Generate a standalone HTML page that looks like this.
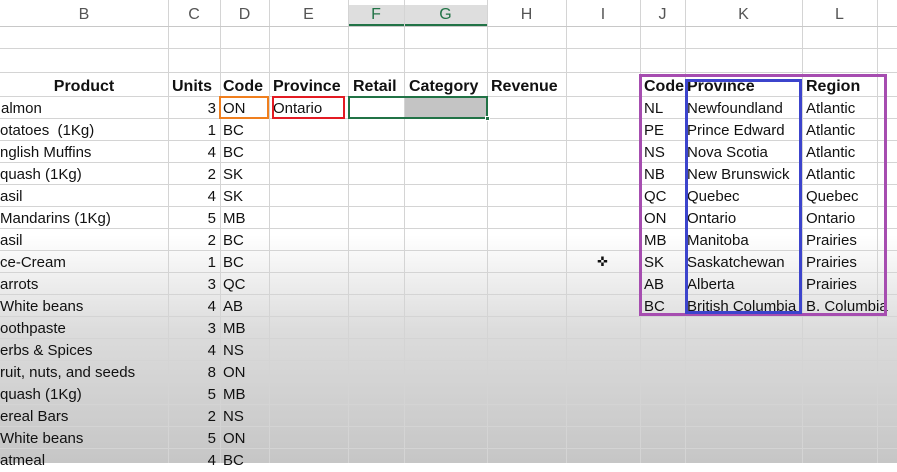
<!DOCTYPE html>
<html><head><meta charset="utf-8"><style>
html,body{margin:0;padding:0}
body{width:897px;height:463px;overflow:hidden;position:relative;font-family:"Liberation Sans",sans-serif;
background:linear-gradient(#fff 0px,#fff 235px,#dcdcdc 330px,#c6c6c6 463px);}
.v{position:absolute;top:0;height:463px;width:1px;background:#d4d4d4}
.h{position:absolute;left:0;width:897px;height:1px;background:#d4d4d4}
.t{position:absolute;font-size:15px;line-height:22px;color:#111;white-space:nowrap;margin-top:2px}
.b{font-weight:bold;font-size:16px}
.r{text-align:right}
.hd{position:absolute;top:4px;height:22px;line-height:22px;font-size:16px;color:#555;text-align:center}
.box{position:absolute;box-sizing:border-box}
</style></head><body>
<div class="box" style="left:348px;top:5px;width:139px;height:21px;background:#dedede;border-bottom:2px solid #217346"></div>
<div class="hd" style="left:0;width:168px">B</div>
<div class="hd" style="left:168px;width:52px">C</div>
<div class="hd" style="left:220px;width:49px">D</div>
<div class="hd" style="left:269px;width:79px">E</div>
<div class="hd" style="left:348px;width:56px;color:#217346">F</div>
<div class="hd" style="left:404px;width:83px;color:#217346">G</div>
<div class="hd" style="left:487px;width:79px">H</div>
<div class="hd" style="left:566px;width:74px">I</div>
<div class="hd" style="left:640px;width:45px">J</div>
<div class="hd" style="left:685px;width:117px">K</div>
<div class="hd" style="left:802px;width:75px">L</div>
<div class="v" style="left:168px"></div><div class="v" style="left:220px"></div><div class="v" style="left:269px"></div>
<div class="v" style="left:348px"></div><div class="v" style="left:404px"></div><div class="v" style="left:487px"></div>
<div class="v" style="left:566px"></div><div class="v" style="left:640px"></div><div class="v" style="left:685px"></div>
<div class="v" style="left:802px"></div><div class="v" style="left:877px"></div>
<div class="h" style="top:26px;background:#c8c8c8"></div>
<div class="h" style="top:48px"></div><div class="h" style="top:72px"></div><div class="h" style="top:96px"></div>
<div class="h" style="top:118px"></div><div class="h" style="top:140px"></div><div class="h" style="top:162px"></div>
<div class="h" style="top:184px"></div><div class="h" style="top:206px"></div><div class="h" style="top:228px"></div>
<div class="h" style="top:250px"></div><div class="h" style="top:272px"></div><div class="h" style="top:294px"></div>
<div class="h" style="top:316px"></div><div class="h" style="top:338px"></div><div class="h" style="top:360px"></div>
<div class="h" style="top:382px"></div><div class="h" style="top:404px"></div><div class="h" style="top:426px"></div>
<div class="h" style="top:448px"></div>
<div class="box" style="left:405px;top:97px;width:82px;height:21px;background:#c4c4c4"></div>
<div class="t b" style="left:0;width:168px;top:74px;text-align:center">Product</div>
<div class="t b" style="left:172px;top:74px">Units</div>
<div class="t b" style="left:223px;top:74px">Code</div>
<div class="t b" style="left:273px;top:74px">Province</div>
<div class="t b" style="left:353px;top:74px">Retail</div>
<div class="t b" style="left:409px;top:74px">Category</div>
<div class="t b" style="left:491px;top:74px">Revenue</div>
<div class="t" style="left:1px;top:96px">almon</div>
<div class="t" style="left:0;top:118px">otatoes&nbsp; (1Kg)</div>
<div class="t" style="left:0;top:140px">nglish Muffins</div>
<div class="t" style="left:0;top:162px">quash (1Kg)</div>
<div class="t" style="left:0;top:184px">asil</div>
<div class="t" style="left:0;top:206px">Mandarins (1Kg)</div>
<div class="t" style="left:0;top:228px">asil</div>
<div class="t" style="left:0;top:250px">ce-Cream</div>
<div class="t" style="left:0;top:272px">arrots</div>
<div class="t" style="left:0;top:294px">White beans</div>
<div class="t" style="left:0;top:316px">oothpaste</div>
<div class="t" style="left:0;top:338px">erbs &amp; Spices</div>
<div class="t" style="left:0;top:360px">ruit, nuts, and seeds</div>
<div class="t" style="left:0;top:382px">quash (1Kg)</div>
<div class="t" style="left:0;top:404px">ereal Bars</div>
<div class="t" style="left:0;top:426px">White beans</div>
<div class="t" style="left:0;top:448px">atmeal</div>
<div class="t r" style="left:168px;width:48px;top:96px">3</div>
<div class="t r" style="left:168px;width:48px;top:118px">1</div>
<div class="t r" style="left:168px;width:48px;top:140px">4</div>
<div class="t r" style="left:168px;width:48px;top:162px">2</div>
<div class="t r" style="left:168px;width:48px;top:184px">4</div>
<div class="t r" style="left:168px;width:48px;top:206px">5</div>
<div class="t r" style="left:168px;width:48px;top:228px">2</div>
<div class="t r" style="left:168px;width:48px;top:250px">1</div>
<div class="t r" style="left:168px;width:48px;top:272px">3</div>
<div class="t r" style="left:168px;width:48px;top:294px">4</div>
<div class="t r" style="left:168px;width:48px;top:316px">3</div>
<div class="t r" style="left:168px;width:48px;top:338px">4</div>
<div class="t r" style="left:168px;width:48px;top:360px">8</div>
<div class="t r" style="left:168px;width:48px;top:382px">5</div>
<div class="t r" style="left:168px;width:48px;top:404px">2</div>
<div class="t r" style="left:168px;width:48px;top:426px">5</div>
<div class="t r" style="left:168px;width:48px;top:448px">4</div>
<div class="t" style="left:223px;top:96px">ON</div>
<div class="t" style="left:223px;top:118px">BC</div>
<div class="t" style="left:223px;top:140px">BC</div>
<div class="t" style="left:223px;top:162px">SK</div>
<div class="t" style="left:223px;top:184px">SK</div>
<div class="t" style="left:223px;top:206px">MB</div>
<div class="t" style="left:223px;top:228px">BC</div>
<div class="t" style="left:223px;top:250px">BC</div>
<div class="t" style="left:223px;top:272px">QC</div>
<div class="t" style="left:223px;top:294px">AB</div>
<div class="t" style="left:223px;top:316px">MB</div>
<div class="t" style="left:223px;top:338px">NS</div>
<div class="t" style="left:223px;top:360px">ON</div>
<div class="t" style="left:223px;top:382px">MB</div>
<div class="t" style="left:223px;top:404px">NS</div>
<div class="t" style="left:223px;top:426px">ON</div>
<div class="t" style="left:223px;top:448px">BC</div>
<div class="t" style="left:273px;top:96px">Ontario</div>
<div class="box" style="left:219px;top:96px;width:50px;height:23px;border:2px solid #f07f1e"></div>
<div class="box" style="left:272px;top:96px;width:73px;height:23px;border:2px solid #e31b23"></div>
<div class="box" style="left:348px;top:96px;width:140px;height:23px;border:2px solid #217346"></div>
<div class="box" style="left:485px;top:116px;width:5px;height:5px;background:#217346;border:1px solid #fff"></div>
<div class="t b" style="left:644px;top:74px">Code</div>
<div class="t b" style="left:687px;top:74px">Province</div>
<div class="t b" style="left:806px;top:74px">Region</div>
<div class="t" style="left:644px;top:96px">NL</div><div class="t" style="left:687px;top:96px">Newfoundland</div><div class="t" style="left:806px;top:96px">Atlantic</div>
<div class="t" style="left:644px;top:118px">PE</div><div class="t" style="left:687px;top:118px">Prince Edward</div><div class="t" style="left:806px;top:118px">Atlantic</div>
<div class="t" style="left:644px;top:140px">NS</div><div class="t" style="left:687px;top:140px">Nova Scotia</div><div class="t" style="left:806px;top:140px">Atlantic</div>
<div class="t" style="left:644px;top:162px">NB</div><div class="t" style="left:687px;top:162px">New Brunswick</div><div class="t" style="left:806px;top:162px">Atlantic</div>
<div class="t" style="left:644px;top:184px">QC</div><div class="t" style="left:687px;top:184px">Quebec</div><div class="t" style="left:806px;top:184px">Quebec</div>
<div class="t" style="left:644px;top:206px">ON</div><div class="t" style="left:687px;top:206px">Ontario</div><div class="t" style="left:806px;top:206px">Ontario</div>
<div class="t" style="left:644px;top:228px">MB</div><div class="t" style="left:687px;top:228px">Manitoba</div><div class="t" style="left:806px;top:228px">Prairies</div>
<div class="t" style="left:644px;top:250px">SK</div><div class="t" style="left:687px;top:250px">Saskatchewan</div><div class="t" style="left:806px;top:250px">Prairies</div>
<div class="t" style="left:644px;top:272px">AB</div><div class="t" style="left:687px;top:272px">Alberta</div><div class="t" style="left:806px;top:272px">Prairies</div>
<div class="t" style="left:644px;top:294px">BC</div><div class="t" style="left:687px;top:294px">British Columbia</div><div class="t" style="left:806px;top:294px">B. Columbia</div>
<div class="box" style="left:639px;top:74px;width:248px;height:242px;border:3px solid #a64db0"></div>
<div class="box" style="left:685px;top:79px;width:117px;height:235px;border:3px solid #3c44cc"></div>
<div class="t" style="left:597px;top:252px;font-size:13px;line-height:16px">✜</div>
</body></html>
